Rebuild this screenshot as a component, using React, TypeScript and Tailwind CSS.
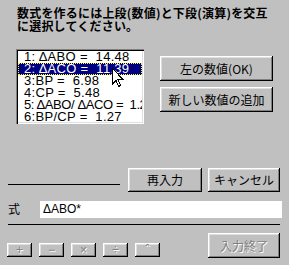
import React from 'react';

const raised =
  'shadow-[inset_-1px_-1px_#000,inset_1px_1px_#fff,inset_-2px_-2px_#808080,inset_2px_2px_#dfdfdf]';

const rows = [
  '1: ΔABO =  14.48',
  '2: ΔACO =  11.39',
  '3:BP =  6.98',
  '4:CP =  5.48',
  '5: ΔABO/ ΔACO =  1.27',
  '6:BP/CP =  1.27',
];

const ops = ['+', '−', '×', '÷', 'ˆ'];

export default function App() {
  return (
    <div
      className="relative w-[289px] h-[265px] bg-[#c0c0c0] overflow-hidden text-black flex flex-col"
      style={{ fontFamily: '"Liberation Sans", "Noto Sans CJK JP", sans-serif' }}
    >
      {/* heading */}
      <div
        className="pt-[6px] pl-[17px] text-[12px] leading-[13px] font-bold tracking-[0.2px]"
        style={{ fontFamily: '"Noto Sans CJK JP", sans-serif' }}
      >
        <div>数式を作るには上段(数値)と下段(演算)を交互</div>
        <div>に選択してください。</div>
      </div>

      {/* list + buttons */}
      <div className="flex mt-[17px]">
        <div className="ml-[16px] w-[128px] h-[75px] bg-white p-[2px] shadow-[inset_1px_1px_#808080,inset_2px_2px_#000,inset_-1px_-1px_#fff,inset_-2px_-2px_#dfdfdf]">
          <div className="w-full h-full overflow-hidden text-[13px] leading-[12px]">
            {rows.map((r, i) => (
              <div
                key={i}
                className={
                  'h-[12px] whitespace-pre pl-[6px] ' +
                  (i === 4 ? 'tracking-[-0.4px] ' : 'tracking-[0.3px] ') +
                  (i === 1 ? 'bg-[#000080] text-white outline-1 outline-dotted outline-[#ffff00] -outline-offset-1' : '')
                }
              >
                {r}
              </div>
            ))}
          </div>
        </div>

        <div
          className="ml-[16px] pt-[7px] flex flex-col gap-[6px] text-[12px]"
          style={{ fontFamily: '"Noto Sans CJK JP", sans-serif' }}
        >
          <div className={`w-[113px] h-[25px] bg-[#c0c0c0] flex items-center justify-center ${raised}`}>
            左の数値(OK)
          </div>
          <div className={`w-[113px] h-[25px] bg-[#c0c0c0] flex items-center justify-center ${raised}`}>
            新しい数値の追加
          </div>
        </div>
      </div>

      {/* re-enter / cancel */}
      <div
        className="flex items-start mt-[44px] text-[12px]"
        style={{ fontFamily: '"Noto Sans CJK JP", sans-serif' }}
      >
        <div className="ml-[8px] mt-[16px] w-[112px] h-px bg-black" />
        <div className={`ml-[8px] w-[74px] h-[24px] flex items-center justify-center ${raised}`}>再入力</div>
        <div className={`ml-[6px] w-[72px] h-[24px] flex items-center justify-center ${raised}`}>キャンセル</div>
      </div>

      {/* formula */}
      <div className="flex items-center mt-[8px]">
        <div
          className="ml-[8px] w-[32px] text-[12px]"
          style={{ fontFamily: '"Noto Sans CJK JP", sans-serif' }}
        >
          式
        </div>
        <div className="w-[242px] h-[17px] bg-white text-[12px] leading-[17px] pl-[3px]">ΔABO*</div>
      </div>

      <div className="ml-[8px] mt-[6px] w-[272px] h-px bg-black" />

      {/* operators + finish */}
      <div className="flex items-start mt-[8px]">
        <div className="flex mt-[10px] ml-[7px] gap-[7px]">
          {ops.map((o, i) => (
            <div
              key={i}
              className={`w-[25px] h-[14px] flex items-center justify-center text-[12px] leading-none text-[#808080] [text-shadow:1px_1px_#fff] ${raised}`}
            >
              {o}
            </div>
          ))}
        </div>
        <div
          className={`ml-[48px] w-[72px] h-[25px] flex items-center justify-center text-[12px] text-[#808080] [text-shadow:1px_1px_#fff] ${raised}`}
          style={{ fontFamily: '"Noto Sans CJK JP", sans-serif' }}
        >
          入力終了
        </div>
      </div>

      {/* mouse cursor */}
      <svg className="absolute left-[112px] top-[68px]" width="12" height="20" viewBox="0 0 12 20">
        <path
          d="M0.5 0.5 L0.5 16 L4 12.5 L6.5 18.5 L8.5 17.5 L6 11.5 L11 11.5 Z"
          fill="#fff"
          stroke="#000"
          strokeWidth="1"
          shapeRendering="crispEdges"
        />
      </svg>
    </div>
  );
}
